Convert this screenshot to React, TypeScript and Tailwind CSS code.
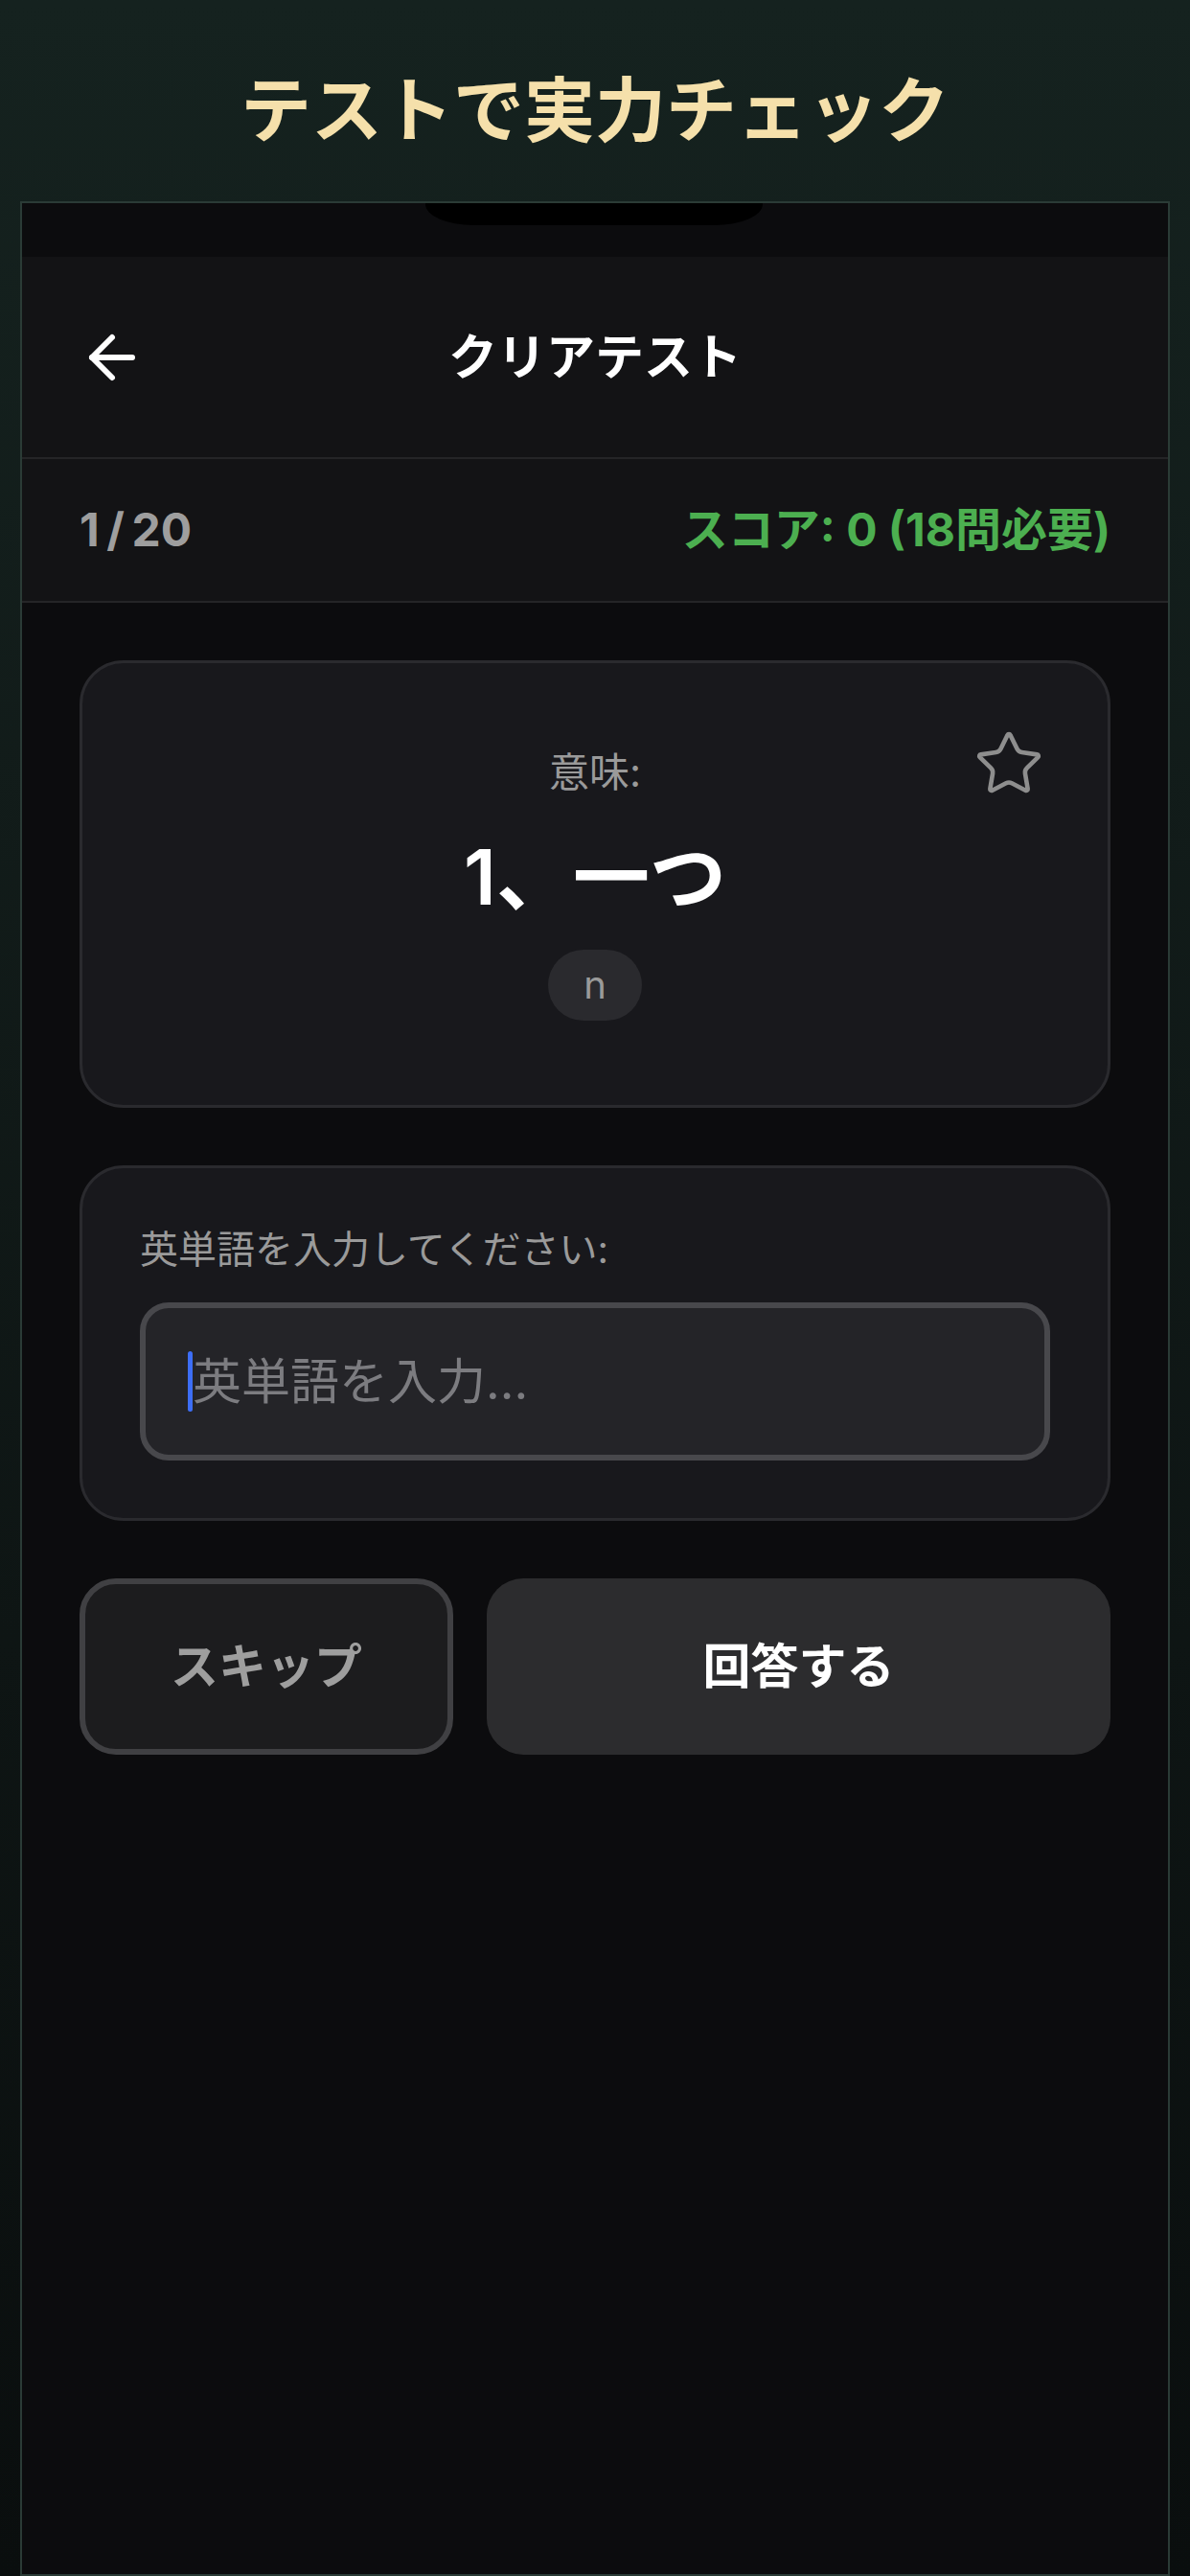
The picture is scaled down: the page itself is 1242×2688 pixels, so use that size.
import React from 'react';
import { ArrowLeft, Star } from 'lucide-react';

const font = 'font-[Inter,"Noto_Sans_CJK_JP",sans-serif]';

const App: React.FC = () => {
  return (
    <div className={`w-[1242px] h-[2688px] bg-linear-to-b from-[#15221f] to-[#0a0e0e] flex flex-col ${font}`}>
      <div className="h-[210px] pt-[20px] flex items-center justify-center">
        <h1 className="text-[74px] leading-none font-bold text-[#f5e0ab]">テストで実力チェック</h1>
      </div>

      <div className="mx-[21px] flex-1 border-2 border-[#2b3b36] bg-[#0c0c0e] flex flex-col relative">
        {/* notch */}
        <div className="absolute top-0 left-[421px] w-[352px] h-[23px] bg-black rounded-bl-[50px_22px] rounded-br-[50px_22px]"></div>

        <div className="h-[56px]"></div>

        <div className="h-[211px] bg-[#131315] border-b-2 border-[#252527] px-[58px] grid grid-cols-[72px_1fr_72px] items-center">
          <ArrowLeft size={72} strokeWidth={2} color="#ffffff" />
          <h2 className="text-center text-[51px] leading-none font-bold text-white">クリアテスト</h2>
          <div></div>
        </div>

        <div className="h-[150px] bg-[#131315] border-b-2 border-[#252527] px-[60px] flex items-center justify-between">
          <span className="text-[48px] leading-none font-bold text-[#9e9e9e]">1{'\u2009'}/{'\u2009'}20</span>
          <span className="text-[48px] leading-none font-bold text-[#4caf50]">スコア: 0 (18問必要)</span>
        </div>

        <div className="px-[60px] pt-[60px] flex flex-col gap-[60px]">
          {/* question card */}
          <div className="relative bg-[#18181c] border-[3px] border-[#2a2a2e] rounded-[46px] pt-[89px] pb-[88px] flex flex-col items-center">
            <Star size={74} strokeWidth={1.5} color="#8e8e8e" strokeLinejoin="miter" className="absolute top-[68px] right-[66px]" />
            <p className="text-[42px] leading-[50px] text-[#9a9a9a]">意味:</p>
            <p className="mt-[36px] text-[80px] leading-[96px] font-semibold text-white">1、一つ</p>
            <span className="mt-[28px] h-[74px] px-[37px] rounded-full bg-[#2a2a2e] flex items-center text-[40px] leading-none text-[#9a9a9a]">n</span>
          </div>

          {/* answer card */}
          <div className="bg-[#18181c] border-[3px] border-[#2a2a2e] rounded-[46px] px-[60px] pt-[60px] pb-[60px] flex flex-col">
            <p className="text-[40px] leading-[50px] text-[#9a9a9a]">英単語を入力してください:</p>
            <div className="mt-[30px] h-[165px] bg-[#242428] border-[6px] border-[#48484c] rounded-[30px] pl-[44px] flex items-center">
              <span className="w-[5px] h-[63px] bg-[#3d6ef7] rounded-full"></span>
              <span className="text-[51px] leading-none text-[#7c7c80]">英単語を入力...</span>
            </div>
          </div>

          {/* buttons */}
          <div className="flex gap-[35px]">
            <button className="w-[390px] h-[184px] bg-[#1c1c1e] border-[6px] border-[#404043] rounded-[38px] text-[50px] font-bold text-[#9e9e9e]">
              スキップ
            </button>
            <button className="flex-1 h-[184px] bg-[#2c2c2e] rounded-[38px] text-[50px] font-bold text-white">
              回答する
            </button>
          </div>
        </div>
      </div>
    </div>
  );
};

export default App;
